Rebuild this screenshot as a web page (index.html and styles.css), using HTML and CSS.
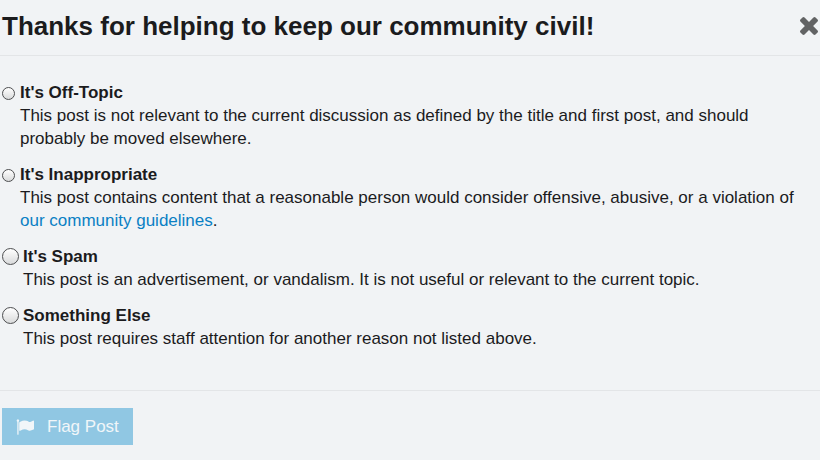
FILE: index.html
```html
<!DOCTYPE html>
<html lang="en">
<head>
<meta charset="utf-8">
<meta name="viewport" content="width=device-width, initial-scale=1">
<title>Flag post</title>
<link rel="stylesheet" href="styles.css">
</head>
<body>
<form class="modal">
  <header class="modal-header">
    <h1 class="modal-title">Thanks for helping to keep our community civil!</h1>
    <button class="close" type="button" aria-label="Close">
      <svg class="close-icon" viewBox="302 366 1188 1188" aria-hidden="true"><path d="M1490 1322q0 40-28 68l-136 136q-28 28-68 28t-68-28l-294-294-294 294q-28 28-68 28t-68-28l-136-136q-28-28-28-68t28-68l294-294-294-294q-28-28-28-68t28-68l136-136q28-28 68-28t68 28l294 294 294-294q28-28 68-28t68 28l136 136q28 28 28 68t-28 68l-294 294 294 294q28 28 28 68z"/></svg>
    </button>
  </header>
  <div class="modal-body">
    <div class="option">
      <input class="radio" type="radio" name="reason" id="off-topic">
      <label class="option-text" for="off-topic"><strong>It's Off-Topic</strong><span class="description">This post is not relevant to the current discussion as defined by the title and first post, and should probably be moved elsewhere.</span></label>
    </div>
    <div class="option">
      <input class="radio" type="radio" name="reason" id="inappropriate">
      <label class="option-text" for="inappropriate"><strong>It's Inappropriate</strong><span class="description">This post contains content that a reasonable person would consider offensive, abusive, or a violation of <a class="link" href="#guidelines">our community guidelines</a>.</span></label>
    </div>
    <div class="option option-large">
      <input class="radio" type="radio" name="reason" id="spam">
      <label class="option-text" for="spam"><strong>It's Spam</strong><span class="description">This post is an advertisement, or vandalism. It is not useful or relevant to the current topic.</span></label>
    </div>
    <div class="option option-large">
      <input class="radio" type="radio" name="reason" id="something-else">
      <label class="option-text" for="something-else"><strong>Something Else</strong><span class="description">This post requires staff attention for another reason not listed above.</span></label>
    </div>
  </div>
  <footer class="modal-footer">
    <button class="submit" type="submit" disabled>
      <svg class="flag-icon" viewBox="0 0 1792 1792" aria-hidden="true"><path d="M320 256q0 72-64 110v1266q0 13-9.500 22.500t-22.500 9.500h-64q-13 0-22.500-9.500t-9.500-22.500v-1266q-64-38-64-110 0-53 37.500-90.500t90.500-37.500 90.500 37.500 37.500 90.500zm1472 64v763q0 25-12.500 38.500t-39.500 27.500q-215 116-369 116-61 0-123.500-22t-108.500-48-115.500-48-142.500-22q-192 0-464 146-17 9-33 9-26 0-45-19t-19-45v-742q0-32 31-55 21-14 79-43 236-120 421-120 107 0 200 29t219 88q38 19 88 19 54 0 117.500-21t110-47 88-47 54.500-21q26 0 45 19t19 45z"/></svg>
      Flag Post
    </button>
  </footer>
</form>
</body>
</html>
```
FILE: styles.css
```css
* {
  box-sizing: border-box;
}

body {
  margin: 0;
  background: #f1f3f5;
  color: #1b1b1d;
  font-family: "Liberation Sans", Arial, sans-serif;
  font-size: 17px;
  line-height: 23px;
}

.modal-header {
  display: flex;
  align-items: center;
  justify-content: space-between;
  padding: 11px 2px 14px;
  border-bottom: 1px solid #e3e5e7;
}

.modal-title {
  margin: 0;
  font-size: 26px;
  line-height: 30px;
}

.close {
  display: flex;
  padding: 0;
  border: 0;
  background: none;
  color: #626364;
}

.close-icon {
  width: 18px;
  height: 18px;
  fill: currentColor;
}

.modal-body {
  display: flex;
  flex-direction: column;
  gap: 13px;
  padding: 25px 2px 40px;
  border-bottom: 1px solid #e3e5e7;
}

.option {
  display: flex;
  gap: 5px;
}

.option-large {
  gap: 4px;
}

.radio {
  appearance: none;
  flex: none;
  width: 13px;
  height: 13px;
  margin: 6px 0 0;
  border: 1px solid #4d4e50;
  border-radius: 50%;
  background: linear-gradient(#ffffff, #d9dadb);
}

.option-large .radio {
  width: 17px;
  height: 17px;
  margin-top: 3px;
}

.option-text {
  flex: 1;
}

.description {
  display: block;
}

.link {
  color: #0a80c4;
  text-decoration: none;
}

.modal-footer {
  padding: 17px 2px;
}

.submit {
  display: flex;
  align-items: center;
  gap: 13px;
  padding: 7px 14px;
  border: 0;
  background: #90c7e3;
  color: #f1f6f9;
  font: inherit;
}

.flag-icon {
  width: 18px;
  height: 18px;
  fill: currentColor;
}
```
